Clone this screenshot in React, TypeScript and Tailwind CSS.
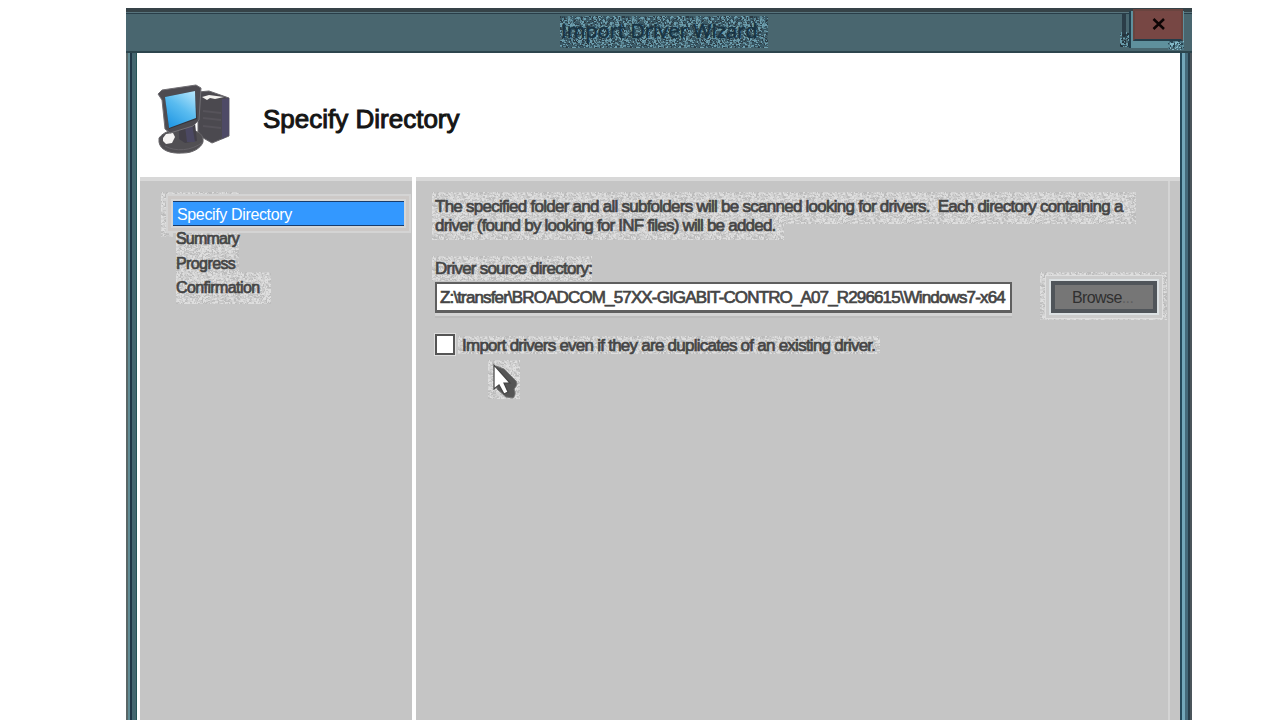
// App.tsx
import React from "react";

interface SpeckleProps {
  id: string;
  colors: string[];
  className?: string;
}

const TILE = 64;

const buildPaths = (count: number): string[] => {
  const paths: string[] = Array(count).fill("");
  let seed = 7;
  for (let y = 0; y < TILE; y += 1) {
    let x = 0;
    while (x < TILE) {
      seed = (seed * 1103515245 + 12345) % 2147483648;
      const value = seed / 2147483648;
      const width = value > 0.6 ? 2 : 1;
      const height = value * 10 - Math.floor(value * 10) > 0.6 ? 2 : 1;
      const slot = Math.floor(value * 997) % (count + 1);
      if (slot < count) {
        paths[slot] += `M${x} ${y}h${width}v${height}h-${width}z`;
      }
      x += width;
    }
  }
  return paths;
};

const Speckle: React.FC<SpeckleProps> = ({ id, colors, className }) => (
  <svg className={`absolute ${className ?? ""}`} aria-hidden="true">
    <defs>
      <pattern id={id} width={TILE} height={TILE} patternUnits="userSpaceOnUse">
        {buildPaths(colors.length).map((d, index) => (
          <path key={colors[index]} d={d} fill={colors[index]} />
        ))}
      </pattern>
    </defs>
    <rect width="100%" height="100%" fill={`url(#${id})`} />
  </svg>
);

const GRAYS = ["#bcbcbc", "#cccccc", "#d4d4d4", "#dedede"];

const ComputerIcon: React.FC = () => (
  <svg width="76" height="74" viewBox="0 0 76 74" className="block">
    <defs>
      <linearGradient id="screen" x1="0.9" y1="0" x2="0.3" y2="1">
        <stop offset="0" stopColor="#b4e5fb" />
        <stop offset="0.5" stopColor="#5abcf0" />
        <stop offset="1" stopColor="#2499e4" />
      </linearGradient>
    </defs>
    <path d="M42 8l11-1 20 7v38L56 59l-14-8z" fill="#4b494f" stroke="#6a686c" />
    <path d="M66 15l7-1v37l-7 4z" fill="#4e4a66" />
    <path d="M47 27l18 2M47 34l18 2M47 42l18 2" stroke="#56535a" strokeWidth="2" />
    <path d="M46 13l7-2 15 2-9 2-5-1-3 2z" fill="#f4f2ef" />
    <path d="M3 54c5-7 16-10 28-8 12 0 17 5 16 12-2 6-10 11-20 11C14 70 4 66 3 58z" fill="#514f53" stroke="#68666a" />
    <path d="M9 62c10 6 27 5 38-4" fill="none" stroke="#656267" />
    <path d="M23 44l16-5 2 18-12 2-6-4z" fill="#434049" />
    <path d="M29 42l7-2 3 18h-8z" fill="#4b4862" />
    <path d="M7 54l3-4 7-1 2 4-3 6-6 1-3-3z" fill="#f5f3f2" />
    <path d="M2 10l4-4 34-5 5 3-2 32-6 6-23 7-5-4L6 16z" fill="#4d4b51" stroke="#727075" />
    <path d="M9 13l30-6 2 28-28 10z" fill="#35343b" />
    <path d="M9 13l30-6 1 27-27 10z" fill="url(#screen)" />
  </svg>
);

const CursorIcon: React.FC = () => (
  <svg width="28" height="38" viewBox="0 0 28 38" className="absolute left-[76px] top-[182px]">
    <path d="M4 3l8 3 12 12c2 3 0 6-2 8 2 4 1 7-1 9l-7-1-9-8z" fill="#555" stroke="#777" />
    <path d="M2 2v24l5-4 5 9 4-2-4-9h6z" fill="#fff" stroke="#444" strokeWidth="1.2" />
  </svg>
);

const steps = [
  { label: "Summary", className: "tracking-[-0.8px]" },
  { label: "Progress", className: "tracking-[-0.6px]" },
  { label: "Confirmation", className: "tracking-[-0.6px]" },
];

const TitleBar: React.FC = () => (
  <div className="relative h-[45px] shrink-0 bg-[#49666f] border-t-4 border-[#364348] shadow-[inset_0_1px_0_#58747d,inset_0_2px_0_#293e49,inset_0_-2px_0_#2c454d]">
    <Speckle
      id="titleNoise"
      colors={["#33505d", "#2b3b44", "#6d9eae", "#5b8796", "#3a5966"]}
      className="left-[434px] top-[4px] w-[208px] h-[32px]"
    />
    <h1 className="absolute left-[435px] top-[3px] leading-[32px] text-[20px] whitespace-nowrap font-['Open_Sans',sans-serif] text-[#173343] tracking-[0.05px] [-webkit-text-stroke:0.5px_#173343]">
      Import Driver Wizard
    </h1>
    <Speckle
      id="edgeNoise"
      colors={["#294653", "#25333c", "#679aa9"]}
      className="left-[994px] top-[20px] w-[14px] h-[15px]"
    />
    <div className="absolute left-[996px] top-[2px] w-1 h-5 bg-[#2b3d48]" />
    <div className="absolute left-[1003px] -top-[1px] w-[55px] h-[37px] border-l-2 border-[#233e4b] bg-[#5f909d]" />
    <Speckle
      id="cornerNoise"
      colors={["#294653", "#83b9c8", "#4d7583"]}
      className="left-[1042px] top-[29px] w-4 h-[9px]"
    />
    <button className="absolute left-[1007px] -top-[3px] w-[50px] h-[32px] bg-[#774744] border-2 border-[#69443f] border-b-[#243d4a] flex items-center justify-center">
      <svg width="14" height="14" viewBox="0 0 14 14" className="ml-[2px] -mt-[2px]">
        <path d="M1.5 2l10.5 10M12 2L1.5 12" stroke="#0d0505" strokeWidth="2.5" />
      </svg>
    </button>
  </div>
);

const Sidebar: React.FC = () => (
  <nav className="relative w-[272px] shrink-0 bg-[#c5c5c5] border-t-4 border-[#d8d8d8] pl-[34px] pt-[20px] text-[16px]">
    <Speckle id="navNoise" colors={GRAYS} className="left-[21px] top-[11px] w-[79px] h-[9px]" />
    <Speckle id="navNoise2" colors={GRAYS} className="left-[36px] top-[48px] w-[63px] h-[46px]" />
    <Speckle id="navNoise3" colors={GRAYS} className="left-[36px] top-[91px] w-[95px] h-[32px]" />
    <Speckle id="navNoise4" colors={GRAYS} className="left-[21px] top-[20px] w-[12px] h-[36px]" />
    <div className="relative -left-px w-[231px] h-[25px] bg-[#3398ff] border-y border-[#183c6c] text-white leading-[25px] pl-[4px] tracking-[-0.36px] shadow-[0_0_0_2px_#d6d6d6,0_0_0_5px_#cdc9c7,0_0_0_7px_#d4d4d4]">
      Specify Directory
    </div>
    <ul className="relative pl-[2px] pt-[1px] text-[#454545] [-webkit-text-stroke:0.7px_#454545]">
      {steps.map((step) => (
        <li key={step.label} className={`h-[24.5px] leading-[24px] ${step.className}`}>
          {step.label}
        </li>
      ))}
    </ul>
  </nav>
);

const Content: React.FC = () => (
  <main className="relative w-[764px] shrink-0 bg-[#c5c5c5] border-t-4 border-[#d8d8d8] pl-[19px] text-[17px] text-[#454545] [-webkit-text-stroke:0.7px_#454545]">
    <div className="absolute right-[10px] top-0 w-[2px] h-full bg-[#d4d4d4]" />
    <Speckle id="textNoise" colors={GRAYS} className="left-[16px] top-[11px] w-[704px] h-[32px]" />
    <Speckle id="textNoise2" colors={GRAYS} className="left-[16px] top-[43px] w-[352px] h-[16px]" />
    <Speckle id="labelNoise" colors={GRAYS} className="left-[16px] top-[75px] w-[160px] h-[25px]" />
    <Speckle id="checkNoise" colors={GRAYS} className="left-[42px] top-[155px] w-[422px] h-[18px]" />
    <Speckle id="cursorNoise" colors={GRAYS} className="left-[72px] top-[179px] w-[32px] h-[39px]" />
    <div className="relative pt-[16px] leading-[19px] whitespace-pre">
      <p className="tracking-[-0.74px]">
        {"The specified folder and all subfolders will be scanned looking for drivers.  Each directory containing a"}
      </p>
      <p className="tracking-[-0.78px]">driver (found by looking for INF files) will be added.</p>
    </div>
    <label className="relative block mt-[24px] leading-[19px] tracking-[-0.77px]">
      Driver source directory:
    </label>
    <div className="relative flex mt-[3px]">
      <div className="w-[577px] h-[31px] mt-[1px] bg-white border-2 border-[#5f5f5f] border-b-[3px] pl-[3px] leading-[27px] whitespace-nowrap tracking-[-0.86px] shadow-[0_3px_0_#d3d3d3,0_5px_0_#bcbcbc]">
        Z:\transfer\BROADCOM_57XX-GIGABIT-CONTRO_A07_R296615\Windows7-x64
      </div>
      <div className="relative ml-[39px]">
        <Speckle id="buttonNoise" colors={GRAYS} className="-left-[11px] -top-[9px] w-[127px] h-[48px]" />
        <button className="relative block w-[106px] h-[32px] bg-[#767676] border-4 border-[#50555a] pl-[17px] text-left leading-[25px] text-[16px] text-[#303030] [-webkit-text-stroke:0px] tracking-[-0.6px] shadow-[0_0_0_2px_#dce1e3,0_0_0_5px_#cbcbcb,0_0_0_6px_#dedede]">
          Browse<span className="text-[#606060]">...</span>
        </button>
      </div>
    </div>
    <label className="relative flex items-center h-[22px] mt-[20px]">
      <span className="w-[20px] h-[21px] bg-white border-2 border-[#555] shadow-[0_0_0_1px_#dedede]" />
      <span className="ml-[7px] mt-[3px] tracking-[-0.75px] whitespace-nowrap">
        Import drivers even if they are duplicates of an existing driver.
      </span>
    </label>
    <CursorIcon />
  </main>
);

const App: React.FC = () => {
  return (
    <div className="h-[720px] w-[1280px] overflow-hidden bg-white font-['Liberation_Sans',sans-serif]">
      <div className="ml-[126px] pt-[8px] w-[1066px] h-full flex flex-col">
        <TitleBar />
        <div className="flex flex-1 min-h-0">
          <div className="flex w-[11px] shrink-0">
            <div className="w-[2px] bg-[#5a6767]" />
            <div className="w-[2px] bg-[#618b94]" />
            <div className="w-[2px] bg-[#203646]" />
            <div className="w-[4px] bg-[#456770]" />
            <div className="w-[1px] bg-[#265557]" />
          </div>
          <div className="w-[1043px] shrink-0 bg-white flex flex-col">
            <header className="h-[124px] shrink-0 flex pl-[19px] pt-[31px]">
              <ComputerIcon />
              <h2 className="ml-[31px] mt-[20px] leading-[30px] text-[26px] text-[#151515] whitespace-nowrap [-webkit-text-stroke:1px_#151515]">
                Specify Directory
              </h2>
            </header>
            <div className="flex flex-1 min-h-0 pl-[3px] gap-[4px]">
              <Sidebar />
              <Content />
            </div>
          </div>
          <div className="flex w-[12px] shrink-0">
            <div className="w-[2px] bg-[#25495a]" />
            <div className="w-[3px] bg-[#73a7b9]" />
            <div className="w-[3px] bg-[#456a7a]" />
            <div className="w-[2px] bg-[#293e4a]" />
            <div className="w-[2px] bg-[#4b555b]" />
          </div>
        </div>
      </div>
    </div>
  );
};

export default App;
